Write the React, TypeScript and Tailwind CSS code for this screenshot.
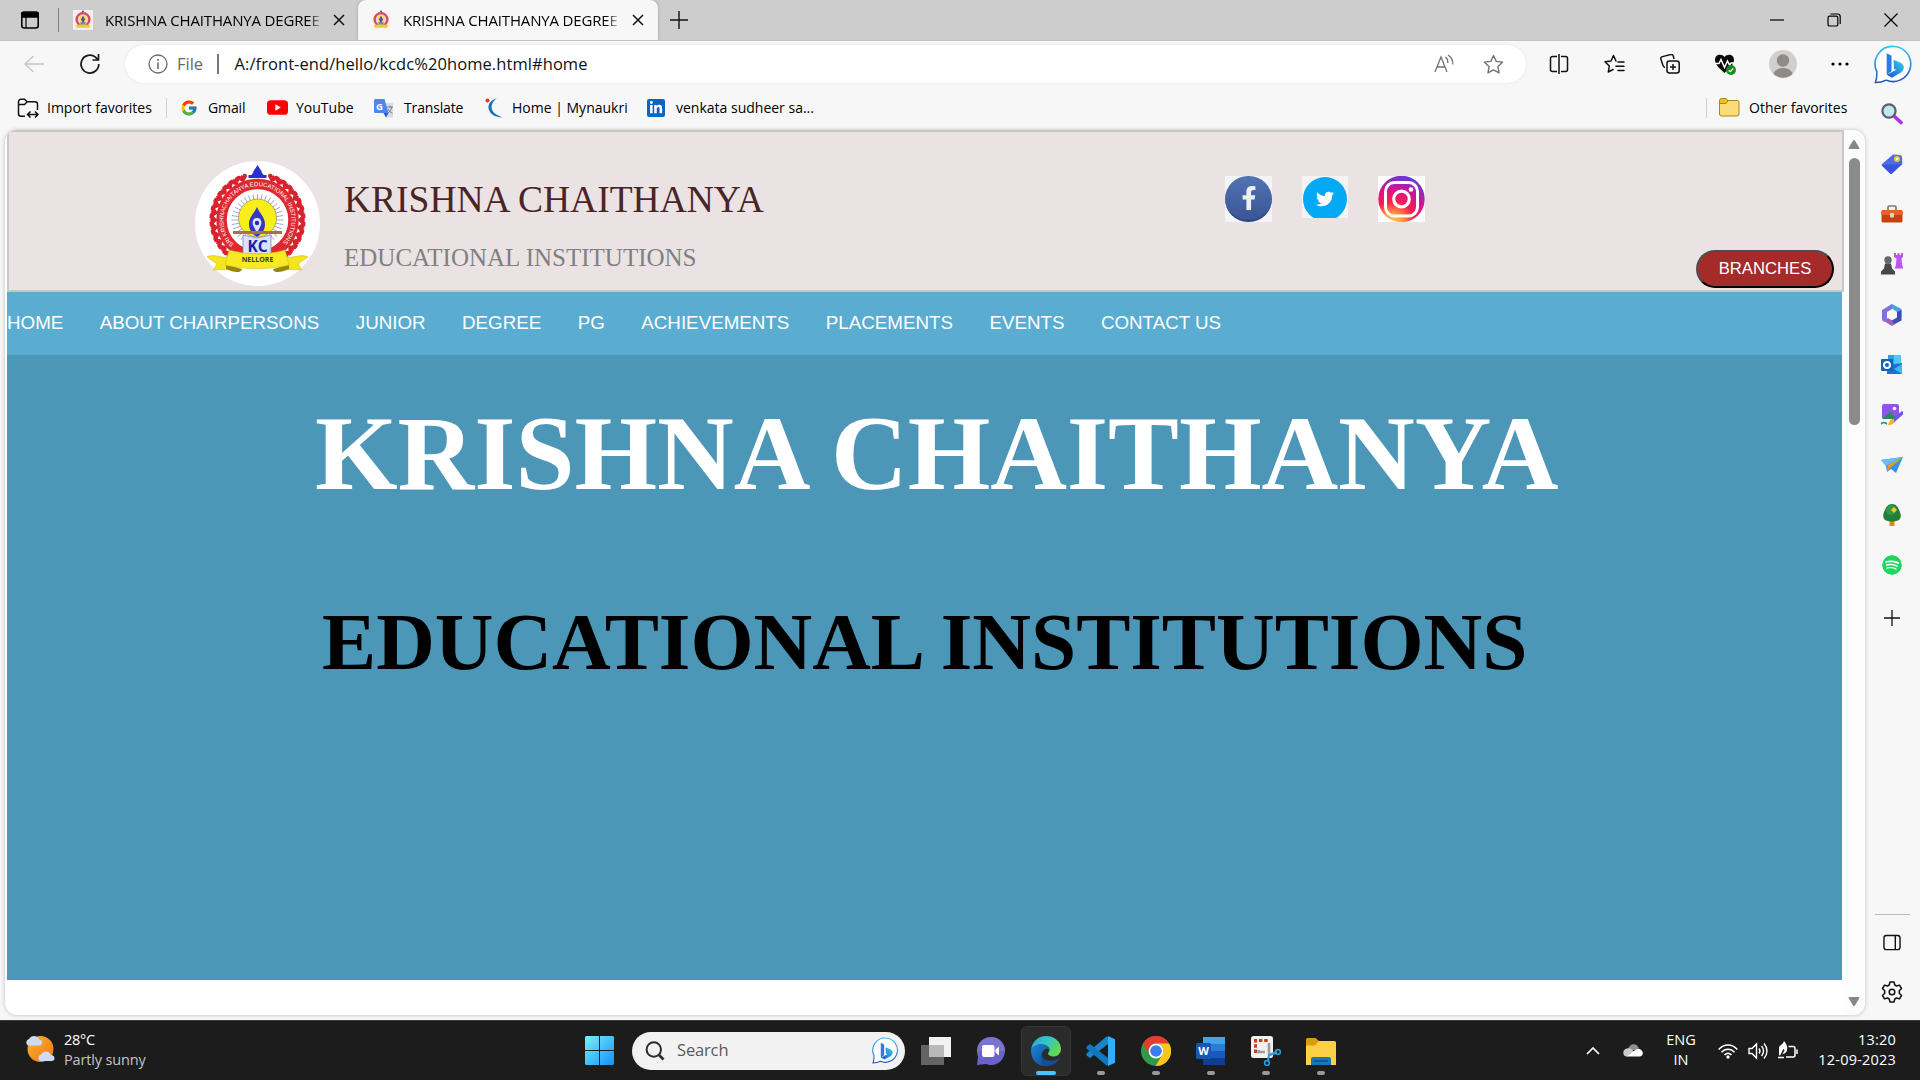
import React from "react";
import { FcGoogle } from "react-icons/fc";
import { FaFacebookF, FaTwitter, FaLinkedinIn } from "react-icons/fa";
import { SiSpotify } from "react-icons/si";

const ui = "font-['Open_Sans','Noto_Sans',sans-serif]";

function Emblem({ className }: { className: string }) {
  const teeth = Array.from({ length: 29 }, (_, i) => -140 + i * 10);
  const rays = Array.from({ length: 36 }, (_, i) => i * 10);
  return (
    <svg viewBox="0 0 125 125" className={className}>
      <circle cx="62.5" cy="62.5" r="62.5" fill="#fff" />
      {teeth.filter((a) => Math.abs(a) > 10).map((a) => (
        <path key={a} d="M62.500 19l-3.600-3.500a2.300 2.300 0 1 1 2.700-3l.9-1.500.9 1.500a2.300 2.300 0 1 1 2.700 3z" fill="#d8232e" transform={`rotate(${a} 62.500 59)`} />
      ))}
      <path d="M62.500 4l4.500 7h-9zM58.500 11h8l2 3h3v3h-18v-3h3z" fill="#2c2fd0" />
      <circle cx="62.500" cy="59" r="36" fill="#fff" stroke="#e02730" strokeWidth="10.500" />
      {rays.map((a) => (
        <path key={a} d="M62.500 33v8" stroke="#8e92cf" strokeWidth="0.800" transform={`rotate(${a} 62.500 59)`} />
      ))}
      <circle cx="62.500" cy="57" r="19" fill="#f8ee1a" stroke="#8f8a6a" strokeWidth="0.700" />
      <path d="M62 46c3 7 8 10 8 17 0 6-3 10-8 13-5-3-8-7-8-13 0-7 5-10 8-17z" fill="#3438c4" />
      <path d="M62 57c4 0 5 4 4 7l-4 8-4-8c-1-3 0-7 4-7z" fill="#dfe4ff" />
      <circle cx="62" cy="62" r="2.200" fill="#2427a8" />
      <path d="M38 70h49v3H38z" fill="#a8714b" />
      <path d="M48 74l14 3 14-3v19H48z" fill="#dbe3fa" stroke="#8089b5" strokeWidth="0.800" />
      <path id="emblem-arc" d="M39 83.500A33.900 33.900 0 1 1 86 83.500" fill="none" />
      <text fontSize="6" fill="#fff" fontFamily="Liberation Sans">
        <textPath href="#emblem-arc" textLength="158" lengthAdjust="spacingAndGlyphs">SRI KRISHNACHAITANYA EDUCATIONAL INSTITUTIONS</textPath>
      </text>
      <text x="62.500" y="90.500" textAnchor="middle" fontSize="15.500" fontWeight="700" fill="#20229f" fontFamily="Open Sans">KC</text>
      <path d="M12 96c8-4 14 2 24 0v11c-6 3-12 1-18 2l4-6zM113 96c-8-4-14 2-24 0v11c6 3 12 1 18 2l-4-6z" fill="#f3e51e" stroke="#c4b61d" strokeWidth="0.500" />
      <path d="M31 104c4 0 8 1 12 3l4 1c-1 5-9 3-16 0zM94 104c-4 0-8 1-12 3l-4 1c1 5 9 3 16 0z" fill="#96870c" />
      <path d="M34 89c18 5 38 5 56 0l4 15c-20 5-43 5-64 0z" fill="#f7e922" stroke="#c8ba20" strokeWidth="0.500" />
      <text x="62.500" y="101" textAnchor="middle" fontSize="7" fontWeight="700" fill="#4a3a28" fontFamily="Open Sans">NELLORE</text>
    </svg>
  );
}

function Bing({ className }: { className: string }) {
  return (
    <svg viewBox="0 0 40 40" className={className} fill="none">
      <defs>
        <linearGradient id="bingRing" x1="0" y1="0" x2="0" y2="1"><stop stopColor="#35c1f5" /><stop offset="1" stopColor="#2450b8" /></linearGradient>
        <linearGradient id="bingB" x1="1" y1="0" x2="0" y2="1"><stop stopColor="#34d6e8" /><stop offset="1" stopColor="#1b50d8" /></linearGradient>
      </defs>
      <path d="M20.500 1.500a18 18 0 1 1-8 34.500c-4 2-7 2.500-11 2.500 1.500-4 1.500-7 1.500-11A18 18 0 0 1 20.500 1.500z" fill="#fff" stroke="url(#bingRing)" strokeWidth="1.600" />
      <path d="M13 8.500l5 2.500v16l-5 3.500z" fill="#2a7be8" />
      <path d="M20 15l8 3.500c4 3 3 7 0 9.500l-9.500 5.500L13 30.500l10-5-2.500-1z" fill="url(#bingB)" />
    </svg>
  );
}

function MiniIcon({ className, bg }: { className: string; bg: string }) {
  return (
    <svg viewBox="0 0 20 20" className={className}>
      <path fill={bg} d="M0 0h20v20H0z" />
      <circle cx="10" cy="9.500" r="6.400" fill="#f7d9d2" stroke="#dd4b55" strokeWidth="2.400" />
      <circle cx="10" cy="9" r="3.300" fill="#f2dc48" />
      <path d="M10 5.500l2 4-2 4-2-4z" fill="#5a4ca8" />
      <path d="M10 0l1.500 2.200h-3z" fill="#5150b5" />
      <path d="M7.500 12h5v3h-5z" fill="#7d80b0" />
      <path d="M2.500 15.500l4-1h7l4 1-1.500 2.300H4z" fill="#e5cf35" />
    </svg>
  );
}

function Close({ className }: { className: string }) {
  return (
    <svg viewBox="0 0 12 12" className={className} stroke="#111" strokeWidth="1.500">
      <path d="M1 1l10 10M11 1L1 11" />
    </svg>
  );
}

function TabBar() {
  return (
    <div className="flex h-10 shrink-0 items-center bg-[#cdcdcd]">
      <svg viewBox="0 0 20 20" className="ml-[20px] size-5 shrink-0" fill="none" stroke="#000" strokeWidth="1.600">
        <rect x="1.800" y="2" width="16.400" height="16" rx="2.500" />
        <path d="M2 3h16v4H2z" fill="#000" /><path d="M6 7v11" strokeWidth="1.200" />
      </svg>
      <div className="ml-[18px] h-6 w-px bg-[#808080]" />
      <div className="flex w-[299px] items-center">
        <MiniIcon className="ml-[14px] size-5 shrink-0" bg="#f7eded" />
        <span className="mb-px ml-3 w-[218px] overflow-hidden bg-linear-to-r from-black from-92% to-[#cdcdcd] bg-clip-text text-[15px] leading-5 tracking-[-0.160px] whitespace-nowrap text-transparent">KRISHNA CHAITHANYA DEGREE C</span>
        <Close className="ml-[10px] size-3 shrink-0" />
      </div>
      <div className="flex h-10 w-[300px] items-center rounded-t-lg bg-[#f7f7f7] shadow-[0_0_3px_#999] [clip-path:inset(0_-4px_0_-4px)]">
        <MiniIcon className="ml-[13px] size-5 shrink-0" bg="#f7f3f3" />
        <span className="mb-px ml-[12px] w-[218px] overflow-hidden bg-linear-to-r from-black from-92% to-[#f7f7f7] bg-clip-text text-[15px] leading-5 tracking-[-0.160px] whitespace-nowrap text-transparent">KRISHNA CHAITHANYA DEGREE C</span>
        <Close className="ml-[11px] size-3 shrink-0" />
      </div>
      <svg viewBox="0 0 18 18" className="ml-[12px] size-[18px]" stroke="#111" strokeWidth="1.400"><path d="M9 0v18M0 9h18" /></svg>
      <svg viewBox="0 0 14 14" className="mr-[43px] ml-auto size-[14px]" stroke="#000" strokeWidth="1.200"><path d="M0 7h14" /></svg>
      <svg viewBox="0 0 14 14" className="mr-[43px] size-[14px]" fill="none" stroke="#000" strokeWidth="1.200"><rect x="1" y="3.200" width="9.800" height="9.800" rx="1.600" /><path d="M3.500 1h7a2.700 2.700 0 0 1 2.700 2.700V11" /></svg>
      <svg viewBox="0 0 14 14" className="mr-[22px] size-[14px]" stroke="#000" strokeWidth="1.200"><path d="M.5.500l13 13M13.500.500l-13 13" /></svg>
    </div>
  );
}

const star = "M10 1.500l2.600 5.500 6 .8-4.400 4.200 1.100 6L10 15.100 4.700 18l1.100-6L1.400 7.800l6-.8z";

function Toolbar() {
  return (
    <div className="flex h-[47px] shrink-0 items-center border-t border-[#c2c2c2] bg-[#f7f7f7]">
      <svg viewBox="0 0 20 18" className="ml-[24px] h-[18px] w-5" fill="none" stroke="#c4c4c4" strokeWidth="1.300"><path d="M20 9H1M9.500 1L1 9l8.500 8" /></svg>
      <svg viewBox="0 0 22 22" className="ml-[35px] size-[22px]" fill="none" stroke="#1a1a1a" strokeWidth="1.700"><path d="M19.800 11A8.900 8.900 0 1 1 16.500 4.200l2.500 2.600M19.500 1v6h-6" /></svg>
      <div className="ml-6 flex h-[38px] w-[1401px] items-center rounded-full bg-white shadow-[0_0_3px_#e2e2e2]">
        <svg viewBox="0 0 20 20" className="ml-[23px] size-5" fill="none" stroke="#6a6a6a" strokeWidth="1.300"><circle cx="10" cy="10" r="9" /><path d="M10 8.500V15M10 5v1.800" strokeWidth="1.600" /></svg>
        <span className="ml-[9px] w-[30px] text-[16.500px] text-[#666]">File</span>
        <span className="ml-[10px] h-5 w-[1.500px] bg-[#777]" />
        <span className="ml-[16px] text-[16.500px] tracking-[0.070px] whitespace-nowrap text-[#111]">A:/front-end/hello/kcdc%20home.html#home</span>
        <svg viewBox="0 0 20 20" className="ml-auto size-5" fill="none" stroke="#727272" strokeWidth="1.300"><path d="M1 18L7 3l6 15M3 13h8M11.500 3c2 1.500 2.500 4 2.300 6M14 1c4 2.500 5 6 4.800 9.500" /></svg>
        <svg viewBox="0 0 20 20" className="mr-[22px] ml-[29px] size-[21px]" fill="none" stroke="#727272" strokeWidth="1.300" strokeLinejoin="round"><path d={star} /></svg>
      </div>
      <svg viewBox="0 0 20 20" className="ml-[23px] size-5" fill="none" stroke="#111" strokeWidth="1.500"><path d="M8 2.500H3.500a2 2 0 0 0-2 2v11a2 2 0 0 0 2 2H8M12 2.500h4.500a2 2 0 0 1 2 2v11a2 2 0 0 1-2 2H12M10 0v20" /></svg>
      <svg viewBox="0 0 21 20" className="ml-[35px] h-5 w-[21px]" fill="none" stroke="#111" strokeWidth="1.500" strokeLinejoin="round" strokeLinecap="round"><path d="M12 7L9.500 1.500 7 7 1 7.800l4.300 4.200-1 6L9 15.500M14 8h6M12 12.200h8M14 16.500h6" /></svg>
      <svg viewBox="0 0 20 20" className="ml-[35px] size-5" fill="none" stroke="#111" strokeWidth="1.500"><rect x="7" y="7" width="12.200" height="12" rx="2.500" /><path d="M13 10v6M10 13h6M5 13.500C3 13 3 12 2.500 10L1 5.500C.5 4 1 3 2.500 2.600l8-2C12 .3 13 1 13.400 2.400L14 5" /></svg>
      <svg viewBox="0 0 22 21" className="ml-[34px] h-[21px] w-[22px]" fill="none"><path d="M10.500 3C8-.5 1-.5 1 6c0 5 5.500 9 9.500 13 4-4 9.500-8 9.500-13 0-6.500-7-6.500-9.500-3z" fill="#0a0a0a" /><path d="M0 9.500h5l2-4 3.500 8 3-6.500 2 4 1.500-2h4" stroke="#fff" strokeWidth="1.500" /><circle cx="17" cy="16" r="4.900" fill="#138a1c" /><path d="M14.700 16.200l1.600 1.500 3-3.200" stroke="#fff" strokeWidth="1.200" /></svg>
      <svg viewBox="0 0 28 28" className="ml-[33px] size-7"><circle cx="14" cy="14" r="14" fill="#d2d0ce" /><circle cx="14" cy="10.500" r="6.200" fill="#8e8b89" /><path d="M4.500 24c2-8 17-8 19 0a14 14 0 0 1-19 0z" fill="#8e8b89" /></svg>
      <svg viewBox="0 0 18 4" className="ml-[34px] h-1 w-[18px]"><circle cx="2" cy="2" r="1.600" /><circle cx="9" cy="2" r="1.600" /><circle cx="16" cy="2" r="1.600" /></svg>
      <Bing className="ml-[25px] size-[39px]" />
    </div>
  );
}

const favText = "text-[14px] whitespace-nowrap text-black";

function Favorites() {
  return (
    <div className="flex h-[43px] shrink-0 items-center pr-[16px] pb-[2px]">
      <svg viewBox="0 0 22 20" className="ml-[17px] h-5 w-[22px] shrink-0" fill="none" stroke="#111" strokeWidth="1.500"><path d="M8 18.200H4A2.500 2.500 0 0 1 1.500 15.700V3.800A2.500 2.500 0 0 1 4 1.300h3.500l2.700 2.500H18a2.500 2.500 0 0 1 2.500 2.500V12M1.500 6.500h6l2.700-2.700M11 16.500h9.500M13.500 13.500l-3 3 3 3M18 13.500l3 3-3 3" /></svg>
      <span className={`ml-[8px] w-[106px] ${favText}`}>Import favorites</span>
      <div className="ml-[13px] h-5 w-px bg-[#cfcfcf]" />
      <FcGoogle className="ml-[13px] size-[18px] shrink-0" />
      <span className={`ml-[10px] w-[39px] tracking-[-0.100px] ${favText}`}>Gmail</span>
      <svg viewBox="0 0 20 14" className="ml-[20px] h-[15px] w-[21px] shrink-0"><rect width="20" height="14" rx="3.500" fill="#f00" /><path d="M8 4l5.200 3L8 10z" fill="#fff" /></svg>
      <span className={`ml-[8px] w-[58px] ${favText}`}>YouTube</span>
      <svg viewBox="0 0 20 20" className="ml-[20px] size-5 shrink-0"><path d="M8 5h11v14.500h-7z" fill="#d9dce0" /><path d="M1.500 1h9l4 14h-13A1.500 1.500 0 0 1 0 13.500v-11A1.500 1.500 0 0 1 1.500 1z" fill="#4a87ee" /><path d="M9.500 15h5l-2.500 4.500z" fill="#2a56c8" /><text x="2" y="11.500" fontSize="9.500" fontWeight="700" fill="#fff" fontFamily="Open Sans">G</text><path d="M13 9h6M16 7.500V9M17.800 9c-.5 3-2.500 5-4 6M14 11c1 2 2.500 3.500 4.500 4.200" stroke="#6f7a85" strokeWidth="1" fill="none" /></svg>
      <span className={`ml-[10px] w-[60px] tracking-[-0.150px] ${favText}`}>Translate</span>
      <svg viewBox="0 0 18 20" className="ml-[21px] h-5 w-[18px] shrink-0"><circle cx="2.500" cy="2.500" r="2" fill="#e2382c" /><path d="M12 0C4 3 2 8 4.500 13c1.500 3.500 6 6 13 6.500C11 17 8 14.500 7 11.500 5.800 7.500 7.500 3.500 12 0z" fill="#176fb8" /></svg>
      <span className={`ml-[9px] w-[115px] ${favText}`}>Home | Mynaukri</span>
      <div className="ml-[20px] flex size-[18px] shrink-0 items-center justify-center rounded-[2px] bg-[#0a66c2]"><FaLinkedinIn className="size-[14px] text-white" /></div>
      <span className={`ml-[11px] ${favText}`}>venkata sudheer sa...</span>
      <div className="ml-auto h-5 w-px bg-[#cfcfcf]" />
      <svg viewBox="0 0 21 19" className="ml-[12px] h-[19px] w-[21px] shrink-0" stroke="#a88420" strokeWidth="1"><rect x=".5" y="2.500" width="19.500" height="15.500" rx="2" fill="#fbdc79" /><path d="M.5 5V2.500a2 2 0 0 1 2-2H7l2 2.500-2 2.500H.5z" fill="#eec21c" /></svg>
      <span className={`ml-[9px] w-[101px] ${favText}`}>Other favorites</span>
    </div>
  );
}

const nav = ["HOME", "ABOUT CHAIRPERSONS", "JUNIOR", "DEGREE", "PG", "ACHIEVEMENTS", "PLACEMENTS", "EVENTS", "CONTACT US"];

function Site() {
  return (
    <div className="ml-[5px] flex h-[885px] w-[1860px] overflow-hidden rounded-xl bg-white pl-[2px] font-['Liberation_Serif',serif] shadow-[0_0_4px_#bbb]">
      <div className="w-[1837px] shrink-0">
        <header className="flex h-[162px] w-[1837px] border-2 border-[#c9c7c7] bg-[#ebe3e3]">
          <Emblem className="mt-[29px] ml-[186px] size-[125px] shrink-0" />
          <div className="ml-[24px] w-[881px] pt-[46px]">
            <div className="h-[43px] text-[37.500px] leading-[43px] whitespace-nowrap text-[#4a2525]">KRISHNA CHAITHANYA</div>
            <div className="mt-[22px] h-[30px] text-[25px] leading-[30px] whitespace-nowrap text-[#808080]">EDUCATIONAL INSTITUTIONS</div>
          </div>
          <div className="mt-[44px] flex items-start">
            <div className="h-[46px] w-[47px] bg-[#f4f4f4]">
              <div className="flex h-[46px] w-[47px] items-center justify-center rounded-full border-b-2 border-[#2c4480] bg-linear-to-b from-[#5273b4] to-[#3b5595]"><FaFacebookF className="size-6 text-[#eeeeee]" /></div>
            </div>
            <div className="ml-[30px] h-[42px] w-[46px] overflow-hidden bg-[#f4f4f4]">
              <div className="mt-px ml-px flex size-[44px] items-center justify-center rounded-full bg-[#03a9f4]"><FaTwitter className="size-[18px] text-white" /></div>
            </div>
            <svg viewBox="0 0 47 46" className="ml-[30px] h-[46px] w-[47px]" fill="none">
              <defs>
                <radialGradient id="insta" cx=".3" cy="1.050" r="1.100"><stop stopColor="#ffd75a" /><stop offset=".22" stopColor="#ff9a3d" /><stop offset=".45" stopColor="#fb1e4e" /><stop offset=".68" stopColor="#d9128e" /><stop offset="1" stopColor="#5b3ce0" /></radialGradient>
              </defs>
              <path d="M0 0h47v46H0z" fill="#fff" /><circle cx="23.500" cy="23" r="23.200" fill="url(#insta)" />
              <rect x="7.500" y="6.500" width="32" height="33.500" rx="9" stroke="#fff" strokeWidth="3" /><circle cx="23.500" cy="23" r="7.800" stroke="#fff" strokeWidth="3.200" /><circle cx="33" cy="13.500" r="2.300" fill="#fff" />
            </svg>
          </div>
          <button className="mt-[118px] ml-[271px] h-[38px] w-[138px] rounded-full border-2 border-t-[#4c4c4c] border-r-black border-b-black border-l-[#4c4c4c] bg-[#a52a2a] pb-px font-['Liberation_Sans',sans-serif] text-[16.670px] whitespace-nowrap text-white">BRANCHES</button>
        </header>
        <nav className="flex h-[63px] w-[1835px] items-center gap-[36.500px] bg-[#5aadd0] pb-px font-['Liberation_Sans',sans-serif] text-[18.750px] text-white">
          {nav.map((n) => <a key={n} className="whitespace-nowrap">{n}</a>)}
        </nav>
        <main className="h-[625px] w-[1835px] bg-[#4c97b7] font-bold">
          <h1 className="ml-[308px] h-[200px] pt-[37px] text-[106.250px] leading-[122px] tracking-[-0.080px] whitespace-nowrap text-white">KRISHNA CHAITHANYA</h1>
          <h2 className="ml-[315px] pt-[40px] text-[81.250px] leading-[94px] tracking-[-0.040px] whitespace-nowrap text-black">EDUCATIONAL INSTITUTIONS</h2>
        </main>
      </div>
      <div className="flex w-[20px] flex-col items-center bg-[#fcfcfc]">
        <svg viewBox="0 0 12 10" className="mt-[10px] h-[9px] w-3" fill="#868686"><path d="M6 0q.6 0 1 .6L12 9q0 1-1 1H1Q0 10 0 9L5 .6Q5.400 0 6 0z" /></svg>
        <div className="mt-[9px] h-[267px] w-[11px] rounded-full bg-[#8b8b8b]" />
        <svg viewBox="0 0 12 10" className="mt-auto mb-[9px] h-[9px] w-3 rotate-180" fill="#868686"><path d="M6 0q.6 0 1 .6L12 9q0 1-1 1H1Q0 10 0 9L5 .6Q5.400 0 6 0z" /></svg>
      </div>
    </div>
  );
}

const sideIcons: React.ReactNode[] = [
  <><path d="M14 14l6 5.500" stroke="#b02ee8" strokeWidth="3.600" strokeLinecap="round" /><circle cx="8" cy="8" r="6.600" fill="#bfe7f8" stroke="#5d6064" strokeWidth="2.200" /></>,
  <><path d="M1 11L12 1.500l7 .5q2 .3 2 2l.3 7L11 20.500q-1 .7-2 0L1 13q-1-1 0-2z" fill="#4c6ce8" /><path d="M1 12l20-1-10 9.500q-1 .7-2 0z" fill="#3a55dc" /><circle cx="16" cy="6" r="3" fill="#f5c637" /><circle cx="16" cy="6" r="1.200" fill="#fff4c2" /></>,
  <><path d="M7 7V4.500Q7 3 8.500 3h5Q15 3 15 4.500V7" stroke="#787878" strokeWidth="1.700" fill="none" /><rect x=".5" y="7" width="21" height="12.500" rx="1.500" fill="#c4420f" /><path d="M.5 8.500Q.5 7 2 7h18q1.500 0 1.500 1.500V12H.5z" fill="#e86225" /><rect x="9" y="10" width="4" height="4.500" rx="1" fill="#d8d8d8" /></>,
  <><path d="M13 0h2v2h1.500V0h2v2H20V0h2v4l-1.500 1.500.7 7 1.300 3h-9l1.300-3 .7-7L13 4z" fill="#bb55ef" /><circle cx="7" cy="7" r="3.700" fill="#686868" /><path d="M4 10.500h6l1 5 3 3v3H0v-3l3-3z" fill="#484848" /></>,
  <><path d="M11 0l9.500 5v8L16 15V8l-5-3.500L6 7z" fill="#43a5e4" /><path d="M11 0v5L6 8v7l-3 3-2-2V6z" fill="#7c72dc" /><path d="M3 17l4-3 4 2.500 5-2.500 4.500 2L11 22z" fill="#9b62be" /><path d="M20.500 6v10.500L13 20l-2-3.500 5-3V8z" fill="#3e4fb3" /><circle cx="11" cy="11" r="4" fill="#f7f7f7" /></>,
  <><path d="M7 1h13v17H7z" fill="#2ba0e8" /><path d="M13 1h7v9h-7z" fill="#50c8f4" /><path d="M6 11l15-2v11H6z" fill="#1b75d0" /><path d="M21 10v10l-8-5z" fill="#45b5ed" /><rect y="5" width="12" height="12" rx="1" fill="#0f63b8" /><circle cx="6" cy="11" r="3" stroke="#fff" strokeWidth="2" fill="none" /></>,
  <><rect x="1" width="17" height="15" rx="2" fill="#8f55e6" /><path d="M1 15l8-7 8 7z" fill="#268f57" /><circle cx="13.500" cy="4.500" r="1.800" fill="#fff" /><path d="M21 9l-9 8" stroke="#6e5adf" strokeWidth="3.500" strokeLinecap="round" /><path d="M13 15c1 5-3 6-6 6l2-5z" fill="#f4b02a" /><path d="M0 20c3-3 4-1 6 0" stroke="#269070" strokeWidth="1.800" fill="none" /></>,
  <><path d="M0 6l22-3-7 16-5-4-4 3-1-6z" fill="#3793e8" /><path d="M22 3L5 12 0 6z" fill="#69bdf7" /><path d="M22 3L7 11l-1 7 3-4z" fill="#e49b22" /></>,
  <><path d="M8.500 15h5v7h-5z" fill="#d79017" /><path d="M11 0c4 0 6 3 7 6 2 3 3 9-1 10.500-4 1.500-8 1.500-12 0-4-1.500-3-7.500-1-10.500 1-3 3-6 7-6z" fill="#237e37" /><circle cx="10" cy="6" r="5" fill="#359748" /><path d="M13 3l3 3-3 3-3-3z" fill="#f7c52c" /></>,
];

function Sidebar() {
  return (
    <aside className="flex w-[52px] shrink-0 flex-col items-center">
      <div className="-mt-[27px] flex flex-col items-center gap-[28.150px]">
        {sideIcons.map((s, i) => <svg key={i} viewBox="0 0 22 22" className="size-[22px]">{s}</svg>)}
        <SiSpotify className="size-[22px] rounded-full bg-white p-px text-[#1ed760]" />
      </div>
      <svg viewBox="0 0 16 16" className="mt-[34px] size-4" stroke="#111" strokeWidth="1.300"><path d="M8 0v16M0 8h16" /></svg>
      <div className="mt-auto h-px w-[35px] bg-[#b9b9b9]" />
      <svg viewBox="0 0 20 18" className="mt-[19px] h-[17px] w-5" fill="none" stroke="#111" strokeWidth="1.500"><rect x="1.500" y="1.500" width="17" height="15" rx="2.500" /><path d="M13.500 1.500v15" /></svg>
      <svg viewBox="0 0 22 22" className="mt-[30px] mb-[17px] size-[22px]" fill="none" stroke="#111" strokeWidth="1.500" strokeLinejoin="round"><circle cx="11" cy="11" r="2.800" /><path d="M9 1h4l.8 3 1.700 1 3-.9 2 3.400-2.200 2.200v2.600l2.200 2.200-2 3.400-3-.9-1.700 1L13 21H9l-.8-3-1.700-1-3 .9-2-3.400 2.200-2.200V9.700L1.500 7.500l2-3.400 3 .9 1.700-1z" /></svg>
    </aside>
  );
}

function TaskApp({ active, idle, children }: { active?: boolean; idle?: boolean; children: React.ReactNode }) {
  return (
    <div className={active ? "flex h-[50px] w-[50px] flex-col items-center rounded-md border border-[#353535] bg-[#2b2b2b]" : "flex h-[50px] w-[50px] flex-col items-center border border-transparent"}>
      <svg viewBox="0 0 30 30" className="mt-[9px] size-[30px]">{children}</svg>
      {!idle && <div className={active ? "mt-[5px] h-1 w-5 rounded-full bg-[#4cc2ff]" : "mt-[5px] h-1 w-2 rounded-full bg-[#9a9a9a]"} />}
    </div>
  );
}

function Taskbar() {
  return (
    <footer className="flex h-[60px] shrink-0 items-center border-t border-[#3a3a3a] bg-[#1c1c1c] text-white">
      <div className="flex w-[585px] shrink-0 items-center">
        <svg viewBox="0 0 30 28" className="mb-1 ml-[25px] h-7 w-[30px]">
          <defs><linearGradient id="sun" x1="0" y1="0" x2="1" y2="1"><stop stopColor="#fbb62d" /><stop offset="1" stopColor="#ee7516" /></linearGradient></defs>
          <circle cx="15.500" cy="14" r="13" fill="url(#sun)" />
          <path d="M3 10.500a3.500 3.500 0 0 1 0-6C5 4 5 1 9 1s4 3 5.500 3.500c3.500.5 3.500 6 0 6z" fill="#cfdaf7" />
          <path d="M15 26a3.500 3.500 0 0 1 0-6c2-.5 2-3.500 6-3.500s4 3 5.500 3.500c4 .5 4 6 0 6z" fill="#cfdaf7" />
        </svg>
        <div className="mb-[2px] ml-[9px] leading-5 whitespace-nowrap">
          <div className="text-[14.500px] tracking-[-0.300px]">28°C</div>
          <div className="text-[14.500px] tracking-[-0.150px] text-[#c4c4c4]">Partly sunny</div>
        </div>
      </div>
      <svg viewBox="0 0 29 29" className="size-[29px]">
        <defs><linearGradient id="win" x1="0" y1="0" x2="29" y2="29" gradientUnits="userSpaceOnUse"><stop stopColor="#7cedfc" /><stop offset="1" stopColor="#0f93f8" /></linearGradient></defs>
        <path d="M1 0h13v14H0V1zM15 0h13l1 1v13H15zM0 15h14v14H1l-1-1zM15 15h14v13l-1 1H15z" fill="url(#win)" />
      </svg>
      <div className="ml-[18px] flex h-[38px] w-[273px] items-center rounded-full bg-[#f2f2f2]">
        <svg viewBox="0 0 20 20" className="ml-[13px] size-5" fill="none" stroke="#2b2b2b" strokeWidth="2"><circle cx="8.800" cy="8.500" r="7.200" /><path d="M14 14l4.500 4.500" strokeWidth="2.600" /></svg>
        <span className="ml-[12px] text-[16.500px] tracking-[-0.150px] text-[#5a5a5a]">Search</span>
        <Bing className="mr-[6px] ml-auto size-[27px]" />
      </div>
      <div className="ml-[6px] flex gap-[5px]">
        <TaskApp idle>
          <path d="M8 1h22v20H8z" fill="#f2f2f2" /><path d="M0 9h23v20H0z" fill="#777" opacity=".8" /><path d="M8 9h15v12H8z" fill="#b9b9b9" />
        </TaskApp>
        <TaskApp idle>
          <path d="M15 1a14 14 0 1 1-5 27.100L1 29l1-8.500A14 14 0 0 1 15 1z" fill="#6a62c8" /><path d="M15 1a14 14 0 0 1 14 14H1A14 14 0 0 1 15 1z" fill="#8581d4" opacity=".6" /><rect x="6" y="9" width="12.500" height="12" rx="2" fill="#fff" /><path d="M19.500 13.500l3.500-3v9l-3.500-3z" fill="#fff" />
        </TaskApp>
        <TaskApp active>
          <defs><linearGradient id="edgeTop" x1="0" y1="0" x2="1" y2=".6"><stop stopColor="#2aa5e0" /><stop offset=".5" stopColor="#34c5c8" /><stop offset="1" stopColor="#63d94c" /></linearGradient><linearGradient id="edgeLow" x1="0" y1="0" x2="1" y2="1"><stop stopColor="#1b85d6" /><stop offset="1" stopColor="#0c4b95" /></linearGradient></defs>
          <path d="M0 14C1 6 7 0 15 0c9 0 15 6 15 13 0 5-4 7.500-7.500 7.500S17 19 17 17.500c0-1 1.500-1.500 1.500-4 0-3-4-5-8-5C5 8.500 1 11 0 14z" fill="url(#edgeTop)" />
          <path d="M0 14c1-3.500 5-5.500 9.500-5.500 5 0 9 2.200 9 5-2-1.500-6.500-.5-7.500 4-1 5 3 10 7 12C8 32 0 25 0 14z" fill="url(#edgeLow)" />
          <path d="M11 17c-1 8 9 10 17.500 5-3 6-9 8-13 8-5-2-7-8-4.500-13z" fill="#124f94" />
        </TaskApp>
        <TaskApp>
          <path d="M22 8L4 22l-3.500-2.500v-2L20.500.500 22 1z" fill="#1b84cf" /><path d="M22 22L4 8 .5 10.500v2L20.500 29.500l1.500-.5z" fill="#1277bd" /><path d="M22 0l7 3.300v23.400L22 30z" fill="#35adf5" />
        </TaskApp>
        <TaskApp>
          <circle cx="15" cy="15" r="15" fill="#2f9b47" /><path d="M2 7.500A15 15 0 0 1 28 7.500H15a7.500 7.500 0 0 0-6.700 11z" fill="#e13e30" /><path d="M28 7.500A15 15 0 0 1 14.500 30l7-11.500A7.500 7.500 0 0 0 15 7.500z" fill="#fbc61a" /><circle cx="15" cy="15" r="7.400" fill="#fff" /><circle cx="15" cy="15" r="5.800" fill="#3a7de8" />
        </TaskApp>
        <TaskApp>
          <path d="M7 1h22v7H7z" fill="#41a5ee" /><path d="M7 8h22v7H7z" fill="#2b7cd3" /><path d="M7 15h22v7H7z" fill="#185abd" /><path d="M7 22h22v7H7z" fill="#103f91" /><rect y="7" width="15" height="16" rx="1.500" fill="#1b55b3" /><text x="7.500" y="19" textAnchor="middle" fontSize="11" fontWeight="700" fill="#fff" fontFamily="Open Sans">W</text>
        </TaskApp>
        <TaskApp>
          <rect width="22" height="22" rx="2.500" fill="#f1f1f1" /><path d="M4.500 17V4.500H17" stroke="#c63f1c" strokeWidth="3" strokeDasharray="3.500 1.800" fill="none" /><path d="M18 7v12M26 16l-9 3.500M7.500 14v2H14" stroke="#9d9d9d" strokeWidth="2.600" fill="none" /><circle cx="27" cy="16" r="2.400" stroke="#2a9ade" strokeWidth="1.600" fill="none" /><circle cx="16" cy="27" r="2.400" stroke="#2a9ade" strokeWidth="1.600" fill="none" /><path d="M18 19l-1 5.500M18 19l6.500-2" stroke="#2a9ade" strokeWidth="2" />
        </TaskApp>
        <TaskApp>
          <path d="M0 3.500Q0 2 1.500 2h8L13 5v6H0z" fill="#d99b12" /><path d="M0 9.500h9L13 5h15.500Q30 5 30 6.500V29H0z" fill="#fdd045" /><path d="M5 29v-6q0-2 2-2h16q2 0 2 2v6z" fill="#1975bc" /><path d="M8 25h14" stroke="#0c4f8a" strokeWidth="1.500" />
        </TaskApp>
      </div>
      <svg viewBox="0 0 14 8" className="ml-auto h-2 w-[14px]" fill="none" stroke="#fff" strokeWidth="1.700"><path d="M1 7l6-6 6 6" /></svg>
      <svg viewBox="0 0 20 13" className="ml-[23px] h-[13px] w-5"><path d="M5 6C6-1 15-2 16 6z" fill="#8f8f8f" /><path d="M4 12.500c-5 0-5-7.500 0-8 3-1 5 1 7 3z" fill="#c9c9c9" /><path d="M3.500 12.500L11 7c2-2 5-2.500 6.500-1.500 3.500 2 3 7-1 7z" fill="#fff" /></svg>
      <div className="mb-px ml-[16px] w-[44px] text-center text-[14.500px] leading-5"><div>ENG</div><div>IN</div></div>
      <svg viewBox="0 0 20 16" className="ml-[15px] h-4 w-5" fill="none" stroke="#fff" strokeWidth="1.500"><path d="M.7 6.500c5-6 13.600-6 18.600 0M3.500 9.300c3.500-4.200 9.500-4.200 13 0M6.500 12c2-2.500 5-2.500 7 0" /><circle cx="10" cy="14" r="1.700" fill="#fff" stroke="none" /></svg>
      <svg viewBox="0 0 20 18" className="ml-[10px] h-[18px] w-5" fill="none" stroke="#fff" strokeWidth="1.400"><path d="M1 6.500h3L8.500 2v14L4 11.500H1zM11 6.500c1.200 1.500 1.200 3.500 0 5M13.500 4c2.500 3 2.500 7 0 10M16 1.500c4 4.500 4 10.500 0 15" /></svg>
      <svg viewBox="0 0 20 18" className="mb-[2px] ml-[10px] h-[18px] w-5" fill="none" stroke="#fff" strokeWidth="1.500"><path d="M10.500 5.500H15a2 2 0 0 1 2 2V14a2 2 0 0 1-2 2H8M19 8.500v4.500" /><path d="M1 15V7c0-3 4-3 5-7 4 4 5 12-1 13z" fill="#fff" stroke="none" /><path d="M0 16.500c4-1 4-5 6-8" stroke="#1c1c1c" /><path d="M0 16.500h6" /></svg>
      <div className="mr-6 mb-[2px] ml-[17px] w-[81px] text-right text-[14.500px] leading-5 tracking-[0.200px] whitespace-nowrap"><div>13:20</div><div>12-09-2023</div></div>
    </footer>
  );
}

export default function App() {
  return (
    <div className={`flex h-[1080px] w-[1920px] flex-col overflow-hidden bg-[#f7f7f7] ${ui}`}>
      <TabBar />
      <Toolbar />
      <div className="flex h-[933px] shrink-0">
        <div className="w-[1866px] shrink-0"><Favorites /><Site /></div>
        <div className="flex pt-[43px]"><Sidebar /></div>
      </div>
      <Taskbar />
    </div>
  );
}
